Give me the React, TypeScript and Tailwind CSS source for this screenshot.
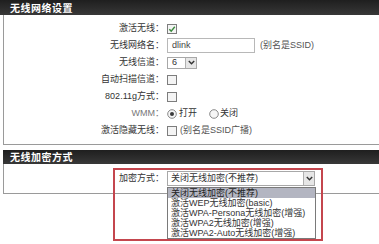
import React from "react";

const FONT = "font-['Liberation_Sans','Noto_Sans_CJK_SC',sans-serif]";

function Checkbox({ checked = false }: { checked?: boolean }) {
  return (
    <svg width="10" height="10" viewBox="0 0 10 10" className="block">
      <rect x="0.5" y="0.5" width="9" height="9" fill="#f4f4f4" stroke="#7d7d7d" />
      {checked && (
        <path d="M2.3 5.2 L4.2 7.1 L7.8 2.8" fill="none" stroke="#3b8a3e" strokeWidth="1.4" />
      )}
    </svg>
  );
}

function Radio({ checked = false }: { checked?: boolean }) {
  return (
    <svg width="10" height="10" viewBox="0 0 10 10" className="block">
      <circle cx="5" cy="5" r="4.3" fill="#f6f6f6" stroke="#7d7d7d" strokeWidth="0.9" />
      {checked && <circle cx="5" cy="5" r="2" fill="#3a3a3a" />}
    </svg>
  );
}

function Arrow() {
  return (
    <div className="w-[11px] h-full bg-[#e6e6e6] border-l border-[#b0b0b0] flex items-center justify-center">
      <svg width="7" height="5" viewBox="0 0 7 5">
        <path d="M0.8 0.9 L3.5 3.7 L6.2 0.9" fill="none" stroke="#333" strokeWidth="1.4" />
      </svg>
    </div>
  );
}

function Row({ label, children, labelClass = "" }: { label: string; children?: React.ReactNode; labelClass?: string }) {
  return (
    <div className="flex h-[17px] items-center">
      <div className={`w-[160px] shrink-0 text-right text-[#333] ${labelClass}`}>{label}：</div>
      <div className="ml-[3px] flex items-center">{children}</div>
    </div>
  );
}

export default function App() {
  return (
    <div className={`relative w-[379px] h-[244px] overflow-hidden bg-white text-[9px] leading-none ${FONT}`}>
      <div className="h-[15px] bg-gradient-to-b from-[#1f1f1f] to-[#383838] flex items-center pl-[10px]">
        <span className="text-white text-[10px] font-bold tracking-[0.5px] font-['Noto_Sans_CJK_SC',sans-serif]">无线网络设置</span>
      </div>
      <div className="ml-[3px] border-l border-b border-[#9a9a9a] pt-[5px] pb-[5px]">
        <Row label="激活无线">
          <Checkbox checked />
        </Row>
        <Row label="无线网络名">
          <div className="w-[88px] h-[15px] border border-[#b8b8b8] flex items-center pl-[4px] text-[#444]">dlink</div>
          <span className="ml-[5px] text-[#555]">(别名是SSID)</span>
        </Row>
        <Row label="无线信道">
          <div className="w-[30px] h-[12px] border border-[#a8a8a8] flex items-center justify-between">
            <span className="pl-[4px] text-[#333]">6</span>
            <Arrow />
          </div>
        </Row>
        <Row label="自动扫描信道">
          <Checkbox />
        </Row>
        <Row label="802.11g方式">
          <Checkbox />
        </Row>
        <Row label="WMM" labelClass="text-[#777]">
          <Radio checked />
          <span className="ml-[2px] text-[#333]">打开</span>
          <span className="ml-[12px]"><Radio /></span>
          <span className="ml-[1px] text-[#333]">关闭</span>
        </Row>
        <Row label="激活隐藏无线">
          <Checkbox />
          <span className="ml-[3px] text-[#555]">(别名是SSID广播)</span>
        </Row>
      </div>
      <div className="mt-[5px] ml-[3px] h-[14px] bg-gradient-to-b from-[#1f1f1f] to-[#383838] flex items-center pl-[7px]">
        <span className="text-white text-[10px] font-bold tracking-[0.5px] font-['Noto_Sans_CJK_SC',sans-serif]">无线加密方式</span>
      </div>
      <div className="ml-[3px] h-[30px] border-l border-b border-[#9a9a9a] flex items-center">
        <div className="w-[160px] shrink-0 text-right text-[#333]">加密方式：</div>
        <div className="ml-[3px] relative">
          <div className="w-[148px] h-[15px] border border-[#a8a8a8] flex items-center justify-between">
            <span className="pl-[3px] text-[#333]">关闭无线加密(不推荐)</span>
            <Arrow />
          </div>
          <div className="absolute left-0 top-[16px] w-[149px] border border-[#7a7a7a] bg-white z-10">
            <div className="h-[10px] leading-[10px] pl-[3px] bg-[#b3b5c1] text-[#222]">关闭无线加密(不推荐)</div>
            <div className="h-[10px] leading-[10px] pl-[3px] text-[#333]">激活WEP无线加密(basic)</div>
            <div className="h-[10px] leading-[10px] pl-[3px] text-[#333]">激活WPA-Persona无线加密(增强)</div>
            <div className="h-[10px] leading-[10px] pl-[3px] text-[#333]">激活WPA2无线加密(增强)</div>
            <div className="h-[10px] leading-[10px] pl-[3px] text-[#333]">激活WPA2-Auto无线加密(增强)</div>
          </div>
        </div>
      </div>
      <div className="absolute left-[113px] top-[168px] w-[210px] h-[73px] border-2 border-[#c4464e] z-20 pointer-events-none" />
    </div>
  );
}
